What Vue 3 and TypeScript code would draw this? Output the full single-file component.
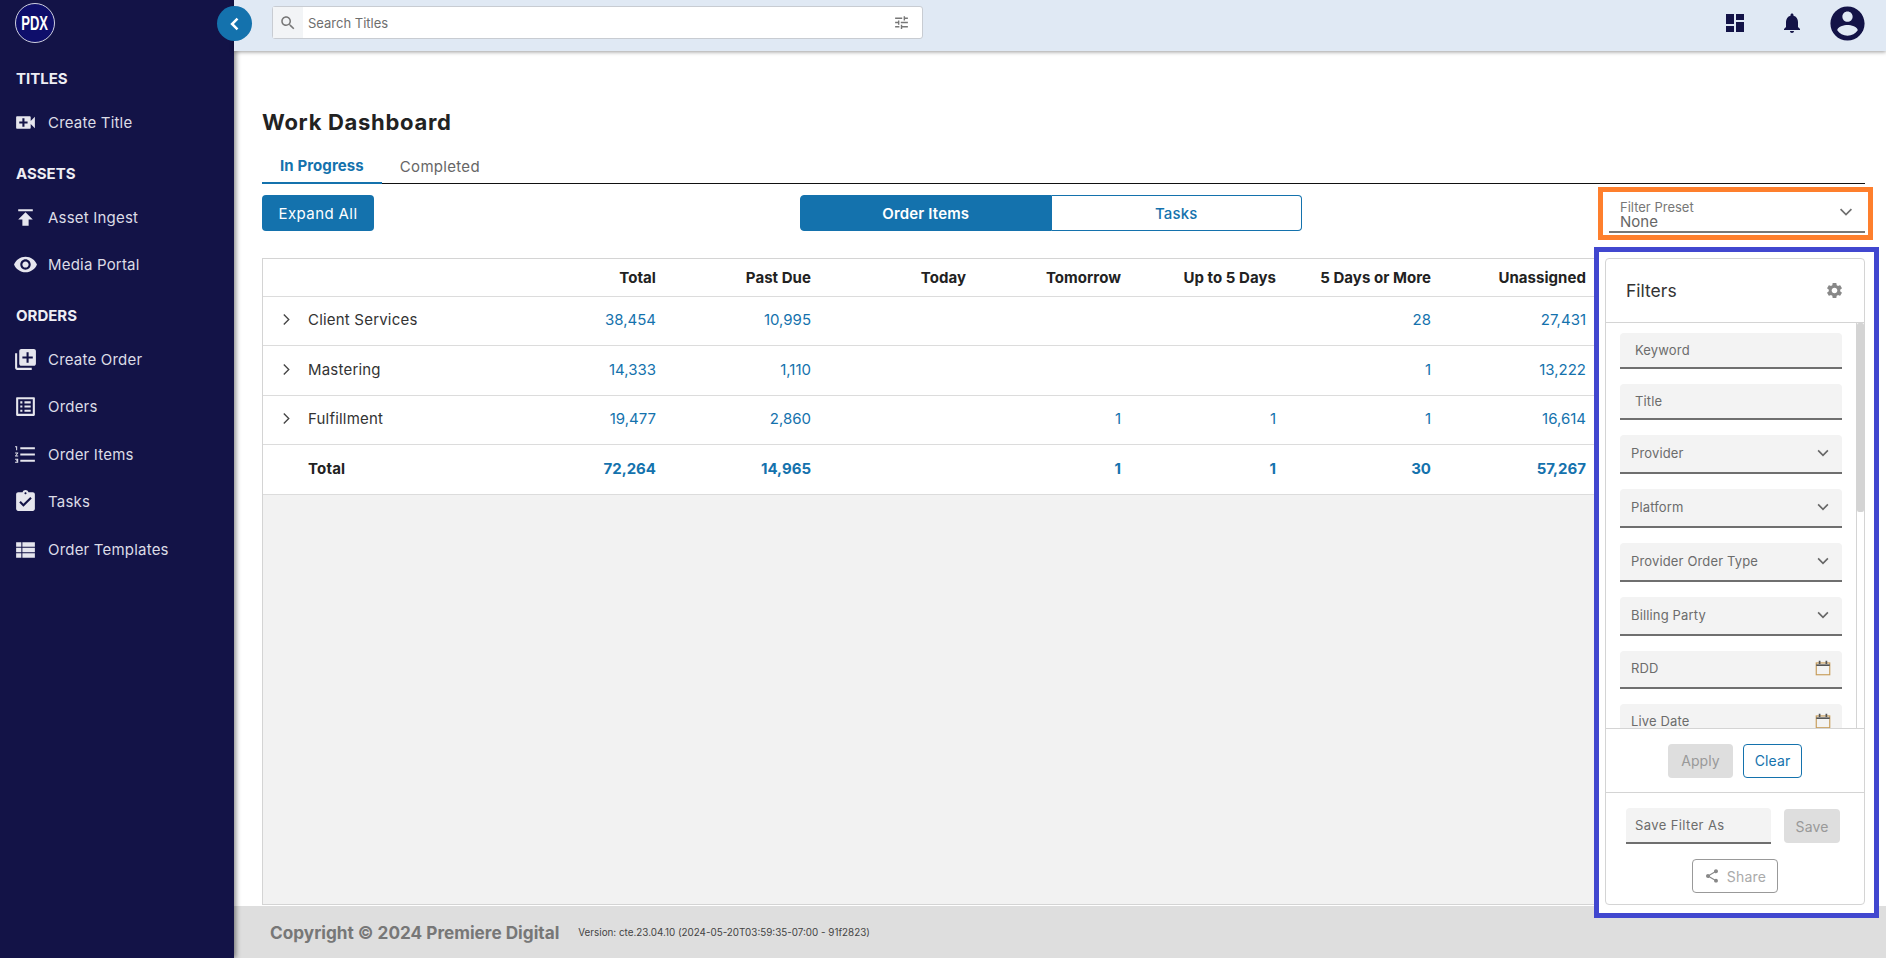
<script setup lang="ts">
import { ref } from 'vue'

interface NavItem { label: string; icon: string }
interface NavGroup { title: string; items: NavItem[] }
interface Row { name: string; values: string[] }
interface Field { label: string; kind: 'text' | 'select' | 'date' }

const icons: Record<string, string> = {
  video: 'M17 10.5V7c0-.55-.45-1-1-1H4c-.55 0-1 .45-1 1v10c0 .55.45 1 1 1h12c.55 0 1-.45 1-1v-3.5l4 4v-11l-4 4zM14 13h-3v3H9v-3H6v-2h3V8h2v3h3v2z',
  publish: 'M5 4v2h14V4H5zm0 10h4v6h6v-6h4l-7-7-7 7z',
  eye: 'M12 4.5C7 4.5 2.73 7.61 1 12c1.73 4.39 6 7.5 11 7.5s9.27-3.11 11-7.5c-1.73-4.39-6-7.5-11-7.5zM12 17c-2.76 0-5-2.24-5-5s2.24-5 5-5 5 2.24 5 5-2.24 5-5 5zm0-8c-1.66 0-3 1.34-3 3s1.34 3 3 3 3-1.34 3-3-1.34-3-3-3z',
  libraryAdd: 'M4 6H2v14c0 1.1.9 2 2 2h14v-2H4V6zm16-4H8c-1.1 0-2 .9-2 2v12c0 1.1.9 2 2 2h12c1.1 0 2-.9 2-2V4c0-1.1-.9-2-2-2zm-1 9h-4v4h-2v-4H9V9h4V5h2v4h4v2z',
  listAlt: 'M19 5v14H5V5h14m1.1-2H3.9c-.5 0-.9.4-.9.9v16.2c0 .4.4.9.9.9h16.2c.4 0 .9-.5.9-.9V3.9c0-.5-.5-.9-.9-.9zM11 7h6v2h-6V7zm0 4h6v2h-6v-2zm0 4h6v2h-6zM7 7h2v2H7zm0 4h2v2H7zm0 4h2v2H7z',
  numbered: 'M2 17h2v.5H3v1h1v.5H2v1h3v-4H2v1zm1-9h1V4H2v1h1v3zm-1 3h1.8L2 13.1v.9h3v-1H3.2L5 10.9V10H2v1zm5-6v2h14V5H7zm0 14h14v-2H7v2zm0-6h14v-2H7v2z',
  assignment: 'M19 3h-4.18C14.4 1.84 13.3 1 12 1c-1.3 0-2.4.84-2.82 2H5c-1.1 0-2 .9-2 2v14c0 1.1.9 2 2 2h14c1.1 0 2-.9 2-2V5c0-1.1-.9-2-2-2zm-7 0c.55 0 1 .45 1 1s-.45 1-1 1-1-.45-1-1 .45-1 1-1zm-2 14l-4-4 1.41-1.41L10 14.17l6.59-6.59L18 9l-8 8z',
  rows: 'M3 5h5v4.4H3zM9 5h12v4.4H9zM3 10.3h5v4.4H3zM9 10.3h12v4.4H9zM3 15.6h5V20H3zM9 15.6h12V20H9z',
  search: 'M15.5 14h-.79l-.28-.27C15.41 12.59 16 11.11 16 9.5 16 5.91 13.09 3 9.5 3S3 5.91 3 9.5 5.91 16 9.5 16c1.61 0 3.09-.59 4.23-1.57l.27.28v.79l5 4.99L20.49 19l-4.99-5zm-6 0C7.01 14 5 11.99 5 9.5S7.01 5 9.5 5 14 7.01 14 9.5 11.99 14 9.5 14z',
  tune: 'M3 17v2h6v-2H3zM3 5v2h10V5H3zm10 16v-2h8v-2h-8v-2h-2v6h2zM7 9v2H3v2h4v2h2V9H7zm14 4v-2H11v2h10zm-6-4h2V7h4V5h-4V3h-2v6z',
  dashboard: 'M3 13h8V3H3v10zm0 8h8v-6H3v6zm10 0h8V11h-8v10zm0-18v6h8V3h-8z',
  bell: 'M12 22c1.1 0 2-.9 2-2h-4c0 1.1.89 2 2 2zm6-6v-5c0-3.07-1.64-5.64-4.5-6.32V4c0-.83-.67-1.5-1.5-1.5s-1.5.67-1.5 1.5v.68C7.63 5.36 6 7.92 6 11v5l-2 2v1h16v-1l-2-2z',
  account: 'M12 2C6.48 2 2 6.48 2 12s4.48 10 10 10 10-4.48 10-10S17.52 2 12 2zm0 3c1.66 0 3 1.34 3 3s-1.34 3-3 3-3-1.34-3-3 1.34-3 3-3zm0 14.2c-2.5 0-4.71-1.28-6-3.22.03-1.99 4-3.08 6-3.08 1.99 0 5.97 1.09 6 3.08-1.29 1.94-3.5 3.22-6 3.22z',
  gear: 'M19.14 12.94c.04-.3.06-.61.06-.94 0-.32-.02-.64-.07-.94l2.03-1.58c.18-.14.23-.41.12-.61l-1.92-3.32c-.12-.22-.37-.29-.59-.22l-2.39.96c-.5-.38-1.03-.7-1.62-.94l-.36-2.54c-.04-.24-.24-.41-.48-.41h-3.84c-.24 0-.43.17-.47.41l-.36 2.54c-.59.24-1.13.57-1.62.94l-2.39-.96c-.22-.08-.47 0-.59.22L2.74 8.87c-.12.21-.08.47.12.61l2.03 1.58c-.05.3-.09.63-.09.94s.02.64.07.94l-2.03 1.58c-.18.14-.23.41-.12.61l1.92 3.32c.12.22.37.29.59.22l2.39-.96c.5.38 1.03.7 1.62.94l.36 2.54c.05.24.24.41.48.41h3.84c.24 0 .44-.17.47-.41l.36-2.54c.59-.24 1.13-.56 1.62-.94l2.39.96c.22.08.47 0 .59-.22l1.92-3.32c.12-.22.07-.47-.12-.61l-2.01-1.58zM12 15.6c-1.98 0-3.6-1.62-3.6-3.6s1.62-3.6 3.6-3.6 3.6 1.62 3.6 3.6-1.62 3.6-3.6 3.6z',
  share: 'M18 16.08c-.76 0-1.44.3-1.96.77L8.91 12.7c.05-.23.09-.46.09-.7s-.04-.47-.09-.7l7.05-4.11c.54.5 1.25.81 2.04.81 1.66 0 3-1.34 3-3s-1.34-3-3-3-3 1.34-3 3c0 .24.04.47.09.7L8.04 9.81C7.5 9.31 6.79 9 6 9c-1.66 0-3 1.34-3 3s1.34 3 3 3c.79 0 1.5-.31 2.04-.81l7.12 4.16c-.05.21-.08.43-.08.65 0 1.61 1.31 2.92 2.92 2.92 1.61 0 2.92-1.31 2.92-2.92s-1.31-2.92-2.92-2.92z'
}

const nav: NavGroup[] = [
  { title: 'TITLES', items: [{ label: 'Create Title', icon: 'video' }] },
  { title: 'ASSETS', items: [{ label: 'Asset Ingest', icon: 'publish' }, { label: 'Media Portal', icon: 'eye' }] },
  {
    title: 'ORDERS',
    items: [
      { label: 'Create Order', icon: 'libraryAdd' },
      { label: 'Orders', icon: 'listAlt' },
      { label: 'Order Items', icon: 'numbered' },
      { label: 'Tasks', icon: 'assignment' },
      { label: 'Order Templates', icon: 'rows' }
    ]
  }
]

const columns = ['Total', 'Past Due', 'Today', 'Tomorrow', 'Up to 5 Days', '5 Days or More', 'Unassigned']

const rows: Row[] = [
  { name: 'Client Services', values: ['38,454', '10,995', '', '', '', '28', '27,431'] },
  { name: 'Mastering', values: ['14,333', '1,110', '', '', '', '1', '13,222'] },
  { name: 'Fulfillment', values: ['19,477', '2,860', '', '1', '1', '1', '16,614'] }
]
const totals = ['72,264', '14,965', '', '1', '1', '30', '57,267']

const fields: Field[] = [
  { label: 'Keyword', kind: 'text' },
  { label: 'Title', kind: 'text' },
  { label: 'Provider', kind: 'select' },
  { label: 'Platform', kind: 'select' },
  { label: 'Provider Order Type', kind: 'select' },
  { label: 'Billing Party', kind: 'select' },
  { label: 'RDD', kind: 'date' },
  { label: 'Live Date', kind: 'date' }
]

const tab = ref('In Progress')
const mode = ref('Order Items')
</script>

<template>
  <div class="shell">
    <aside class="sidebar">
      <div class="logo"><span>PDX</span></div>
      <nav class="nav">
        <section v-for="group in nav" :key="group.title" class="group">
          <h3>{{ group.title }}</h3>
          <a v-for="item in group.items" :key="item.label" class="nav-item">
            <svg viewBox="0 0 24 24" class="nav-icon"><path :d="icons[item.icon]" /></svg>
            <span>{{ item.label }}</span>
          </a>
        </section>
      </nav>
    </aside>

    <div class="main">
      <header class="topbar">
        <button class="collapse">
          <svg viewBox="0 0 24 24" width="20" height="20"><path d="M15 5.5 8.5 12l6.5 6.5" fill="none" stroke="#fff" stroke-width="3" /></svg>
        </button>
        <div class="search">
          <span class="search-icon">
            <svg viewBox="0 0 24 24" width="18" height="18"><path :d="icons.search" /></svg>
          </span>
          <span class="search-text">Search Titles</span>
          <svg viewBox="0 0 24 24" width="17" height="17" class="tune"><path :d="icons.tune" /></svg>
        </div>
        <div class="top-actions">
          <svg viewBox="0 0 24 24" width="24" height="24"><path :d="icons.dashboard" /></svg>
          <svg viewBox="0 0 24 24" width="24" height="24"><path :d="icons.bell" /></svg>
          <svg viewBox="0 0 24 24" width="41" height="41"><path :d="icons.account" /></svg>
        </div>
      </header>

      <main class="content">
        <h1>Work Dashboard</h1>
        <div class="tabs">
          <button v-for="t in ['In Progress', 'Completed']" :key="t" class="tab" :class="{ active: tab === t }" @click="tab = t">{{ t }}</button>
        </div>

        <div class="toolbar">
          <button class="expand">Expand All</button>
          <div class="toggle">
            <button v-for="m in ['Order Items', 'Tasks']" :key="m" :class="{ on: mode === m }" @click="mode = m">{{ m }}</button>
          </div>
          <div class="preset">
            <div class="preset-inner">
              <div class="preset-text">
                <label>Filter Preset</label>
                <span>None</span>
              </div>
              <svg viewBox="0 0 24 24" width="20" height="20" class="chev"><path d="M5.5 8.5 12 15l6.5-6.5" fill="none" stroke="#6f6f6f" stroke-width="2" /></svg>
            </div>
          </div>
        </div>

        <div class="body">
          <div class="table">
            <div class="row head">
              <div></div>
              <div v-for="c in columns" :key="c" class="cell">{{ c }}</div>
            </div>
            <div v-for="r in rows" :key="r.name" class="row">
              <div class="name">
                <svg viewBox="0 0 10 14" width="9" height="13" class="expander"><path d="M2 1.5 7.5 7 2 12.5" fill="none" stroke="#444" stroke-width="1.5" /></svg>
                {{ r.name }}
              </div>
              <div v-for="(v, i) in r.values" :key="i" class="cell num">{{ v }}</div>
            </div>
            <div class="row total">
              <div class="name">Total</div>
              <div v-for="(v, i) in totals" :key="i" class="cell num">{{ v }}</div>
            </div>
          </div>

          <div class="panel-frame">
            <div class="panel">
              <div class="panel-head">
                <span>Filters</span>
                <svg viewBox="0 0 24 24" width="19" height="19"><path :d="icons.gear" /></svg>
              </div>
              <div class="scroller">
                <div class="fields">
                  <div v-for="f in fields" :key="f.label" class="field" :class="f.kind">
                    <span>{{ f.label }}</span>
                    <svg v-if="f.kind === 'select'" viewBox="0 0 24 24" width="18" height="18"><path d="M5.5 8.5 12 15l6.5-6.5" fill="none" stroke="#666" stroke-width="2.2" /></svg>
                    <svg v-if="f.kind === 'date'" viewBox="0 0 16 16" width="18" height="18">
                      <rect x="2" y="3.5" width="12" height="10.5" fill="none" stroke="#c69a55" stroke-width="1" />
                      <path d="M2 5.5h12" stroke="#555" stroke-width="1.5" />
                      <path d="M5 1.5v3M11 1.5v3" stroke="#555" stroke-width="1.5" />
                    </svg>
                  </div>
                </div>
                <div class="scroll-track"><div class="scroll-thumb"></div></div>
              </div>
              <div class="apply-bar">
                <button class="btn disabled">Apply</button>
                <button class="btn outline">Clear</button>
              </div>
              <div class="save-bar">
                <div class="save-row">
                  <div class="field text save-input"><span>Save Filter As</span></div>
                  <button class="btn disabled save">Save</button>
                </div>
                <button class="share">
                  <svg viewBox="0 0 24 24" width="16" height="16"><path :d="icons.share" /></svg>
                  Share
                </button>
              </div>
            </div>
          </div>
        </div>
      </main>

      <footer class="footer">
        <span class="copy">Copyright © 2024 Premiere Digital</span>
        <span class="version">Version: cte.23.04.10 (2024-05-20T03:59:35-07:00 - 91f2823)</span>
      </footer>
    </div>
  </div>
</template>

<style>
html, body {
  margin: 0;
  height: 100%;
  overflow: hidden;
}
</style>

<style scoped>
.shell {
  display: flex;
  height: 958px;
  font-family: Inter, "Liberation Sans", sans-serif;
  color: #222;
  background: #fff;
}
button {
  font-family: inherit;
  cursor: pointer;
}

.sidebar {
  position: relative;
  z-index: 3;
  width: 234px;
  flex: none;
  background: #131347;
  color: #fff;
  box-shadow: 2px 0 5px rgba(0, 0, 0, .45);
}
.logo {
  position: absolute;
  left: 15px;
  top: 3px;
  width: 38px;
  height: 38px;
  border-radius: 50%;
  background: #0e0e6b;
  border: 1px solid #cfd0e0;
  display: flex;
  align-items: center;
  justify-content: center;
}
.logo span {
  font: 700 21px "Liberation Sans", sans-serif;
  transform: scaleX(.62);
}
.nav {
  padding-top: 59px;
}
.group {
  margin-bottom: 7px;
}
.group h3 {
  margin: 0;
  height: 40px;
  line-height: 40px;
  padding-left: 16px;
  font-size: 15px;
  font-weight: 700;
  color: #eeeef4;
}
.nav-item {
  display: flex;
  align-items: center;
  height: 47.5px;
  padding-left: 13px;
  font-size: 15px;
  letter-spacing: .2px;
  color: #dcdce6;
}
.nav-icon {
  width: 25px;
  height: 25px;
  fill: #e6e6ee;
  margin-right: 10px;
  flex: none;
}

.main {
  flex: 1;
  min-width: 0;
  display: flex;
  flex-direction: column;
}
.topbar {
  position: relative;
  z-index: 4;
  height: 51px;
  flex: none;
  display: flex;
  align-items: flex-start;
  background: #e0e9f4;
  box-shadow: 0 1px 4px rgba(0, 0, 0, .4);
}
.collapse {
  position: absolute;
  left: -17px;
  top: 6px;
  width: 35px;
  height: 35px;
  padding: 0;
  border: 0;
  border-radius: 50%;
  background: #1472ad;
  display: flex;
  align-items: center;
  justify-content: center;
}
.search {
  margin: 6px 0 0 38px;
  width: 651px;
  height: 33px;
  box-sizing: border-box;
  display: flex;
  align-items: center;
  background: #fff;
  border: 1px solid #c8ccd2;
  border-radius: 3px;
}
.search-icon {
  width: 30px;
  height: 100%;
  flex: none;
  background: #f2f4f6;
  display: flex;
  align-items: center;
  justify-content: center;
  fill: #777;
}
.search-text {
  flex: 1;
  margin-left: 5px;
  font-size: 13px;
  color: #6e6e6e;
}
.tune {
  fill: #777;
  margin-right: 12px;
}
.top-actions {
  margin-left: auto;
  height: 46px;
  display: flex;
  align-items: center;
  fill: #131347;
  padding-right: 18px;
}
.top-actions svg:nth-child(1) {
  margin-right: 33px;
}
.top-actions svg:nth-child(2) {
  margin-right: 23px;
}

.content {
  flex: 1;
  min-height: 0;
  display: flex;
  flex-direction: column;
  padding: 57px 7px 0 28px;
}
h1 {
  margin: 0;
  height: 28px;
  line-height: 28px;
  font-size: 22px;
  font-weight: 700;
  letter-spacing: .7px;
  color: #222;
}
.tabs {
  display: flex;
  margin: 12px 14px 0 0;
  height: 36px;
  box-sizing: border-box;
  border-bottom: 1px solid #111;
}
.tab {
  padding: 0 18px;
  height: 36px;
  border: 0;
  background: none;
  font-size: 15px;
  letter-spacing: .3px;
  color: #666;
}
.tab.active {
  font-weight: 700;
  letter-spacing: .1px;
  color: #1472ad;
  border-bottom: 2px solid #1472ad;
}

.toolbar {
  display: flex;
  align-items: flex-start;
  height: 63px;
}
.expand {
  margin-top: 11px;
  width: 112px;
  height: 36px;
  border: 0;
  border-radius: 4px;
  background: #1472ad;
  color: #fff;
  font-size: 15px;
  letter-spacing: .4px;
}
.toggle {
  margin: 11px 0 0 426px;
  width: 502px;
  height: 36px;
  display: flex;
}
.toggle button {
  flex: 1;
  height: 36px;
  font-size: 15px;
  font-weight: 600;
  letter-spacing: .15px;
  background: #1472ad;
  color: #fff;
  border: 1px solid #1472ad;
  border-radius: 4px 0 0 4px;
}
.toggle button:not(.on) {
  background: #fff;
  color: #1472ad;
  font-weight: 500;
  border-left: 0;
  border-radius: 0 4px 4px 0;
}
.preset {
  margin: 3px 0 0 296px;
  width: 275px;
  height: 53px;
  box-sizing: border-box;
  border: 5px solid #fe7f2d;
  padding: 0 3px 0 6px;
}
.preset-inner {
  height: 39px;
  display: flex;
  align-items: center;
  justify-content: space-between;
  padding-left: 11px;
  padding-right: 9px;
  border-bottom: 2px solid #777;
}
.preset-text {
  display: flex;
  flex-direction: column;
  padding-top: 6px;
}
.preset-text label {
  font-size: 13px;
  line-height: 14px;
  color: #777;
}
.preset-text span {
  font-size: 15px;
  line-height: 15px;
  color: #666;
}

.body {
  flex: 1;
  min-height: 0;
  display: flex;
  align-items: flex-start;
}
.table {
  flex: 1;
  min-width: 0;
  margin-top: 11px;
  height: 647px;
  box-sizing: border-box;
  border: 1px solid #d4d4d4;
  border-right: 0;
  background: #f2f2f2;
}
.row {
  display: grid;
  grid-template-columns: 238px repeat(7, 155px);
  padding: 0 8px 2px 0;
  height: 49.5px;
  align-items: center;
  background: #fff;
  box-sizing: border-box;
  border-bottom: 1px solid #dcdcdc;
  font-size: 15px;
}
.row.head {
  height: 37.5px;
  padding-bottom: 0;
  font-weight: 700;
  color: #222;
  letter-spacing: .05px;
}
.cell {
  text-align: right;
}
.num {
  color: #1472ad;
}
.name {
  display: flex;
  align-items: center;
  padding-left: 45px;
  position: relative;
  letter-spacing: .2px;
  color: #333;
}
.expander {
  position: absolute;
  left: 19px;
}
.total {
  font-weight: 700;
}
.total .name {
  color: #222;
}

.panel-frame {
  position: relative;
  z-index: 1;
  flex: none;
  width: 285px;
  height: 671px;
  box-sizing: border-box;
  border: 5px solid #4147cf;
  padding: 6px;
  background: #fff;
}
.panel {
  height: 647px;
  width: 260px;
  box-sizing: border-box;
  border: 1px solid #d4d4d4;
  border-radius: 4px;
  display: flex;
  flex-direction: column;
}
.panel-head {
  height: 64px;
  flex: none;
  box-sizing: border-box;
  border-bottom: 1px solid #d4d4d4;
  display: flex;
  align-items: center;
  justify-content: space-between;
  padding: 0 20px;
  font-size: 17.5px;
  color: #333;
  fill: #888;
}
.scroller {
  position: relative;
  height: 405px;
  flex: none;
  overflow: hidden;
}
.scroll-track {
  position: absolute;
  top: 0;
  right: 0;
  bottom: 0;
  width: 7px;
  border-left: 1px solid #d4d4d4;
}
.scroll-thumb {
  height: 189px;
  background: #d4d4d4;
  border-radius: 2px;
}
.fields {
  padding: 10px 0 0 14px;
  width: 222px;
}
.field {
  box-sizing: border-box;
  display: flex;
  align-items: center;
  justify-content: space-between;
  background: #f3f3f3;
  border-bottom: 2px solid #6f6f6f;
  border-radius: 4px 4px 0 0;
  font-size: 13px;
  letter-spacing: .15px;
  color: #6c6c6c;
}
.field.text {
  height: 36px;
  padding-left: 15px;
  margin-bottom: 15px;
}
.field.select {
  height: 39px;
  padding: 0 10px 2px 11px;
  margin-bottom: 15px;
}
.field.date {
  height: 38px;
  padding: 0 10px 2px 11px;
  margin-bottom: 15px;
}
.apply-bar {
  height: 65px;
  flex: none;
  box-sizing: border-box;
  border-top: 1px solid #d4d4d4;
  border-bottom: 1px solid #d4d4d4;
  display: flex;
  align-items: center;
  justify-content: center;
  gap: 10px;
}
.btn {
  height: 34px;
  padding: 0;
  border-radius: 4px;
  font-size: 14px;
  letter-spacing: .1px;
}
.btn.disabled {
  width: 65px;
  border: 0;
  background: #dedede;
  color: #999;
}
.btn.outline {
  width: 59px;
  border: 1px solid #1472ad;
  background: #fff;
  color: #1472ad;
}
.save-bar {
  flex: 1;
  padding-top: 15px;
  display: flex;
  flex-direction: column;
  align-items: center;
}
.save-row {
  display: flex;
  width: 100%;
  align-items: center;
  box-sizing: border-box;
  padding-left: 20px;
}
.field.save-input {
  width: 145px;
  height: 36px;
  margin: 0;
  padding-left: 9px;
  letter-spacing: .4px;
}
.btn.save {
  width: 56px;
  margin-left: 13px;
}
.share {
  margin-top: 15px;
  width: 86px;
  height: 34px;
  padding: 0;
  display: flex;
  align-items: center;
  justify-content: center;
  gap: 7px;
  border: 1px solid #999;
  border-radius: 4px;
  background: #fff;
  color: #aaa;
  font-size: 14px;
  letter-spacing: .2px;
  fill: #888;
}

.footer {
  height: 52px;
  flex: none;
  display: flex;
  align-items: center;
  padding-left: 36px;
  gap: 19px;
  background: #dedede;
}
.copy {
  font-size: 17.2px;
  font-weight: 700;
  color: #777;
}
.version {
  font-size: 9.85px;
  color: #444;
}
</style>
